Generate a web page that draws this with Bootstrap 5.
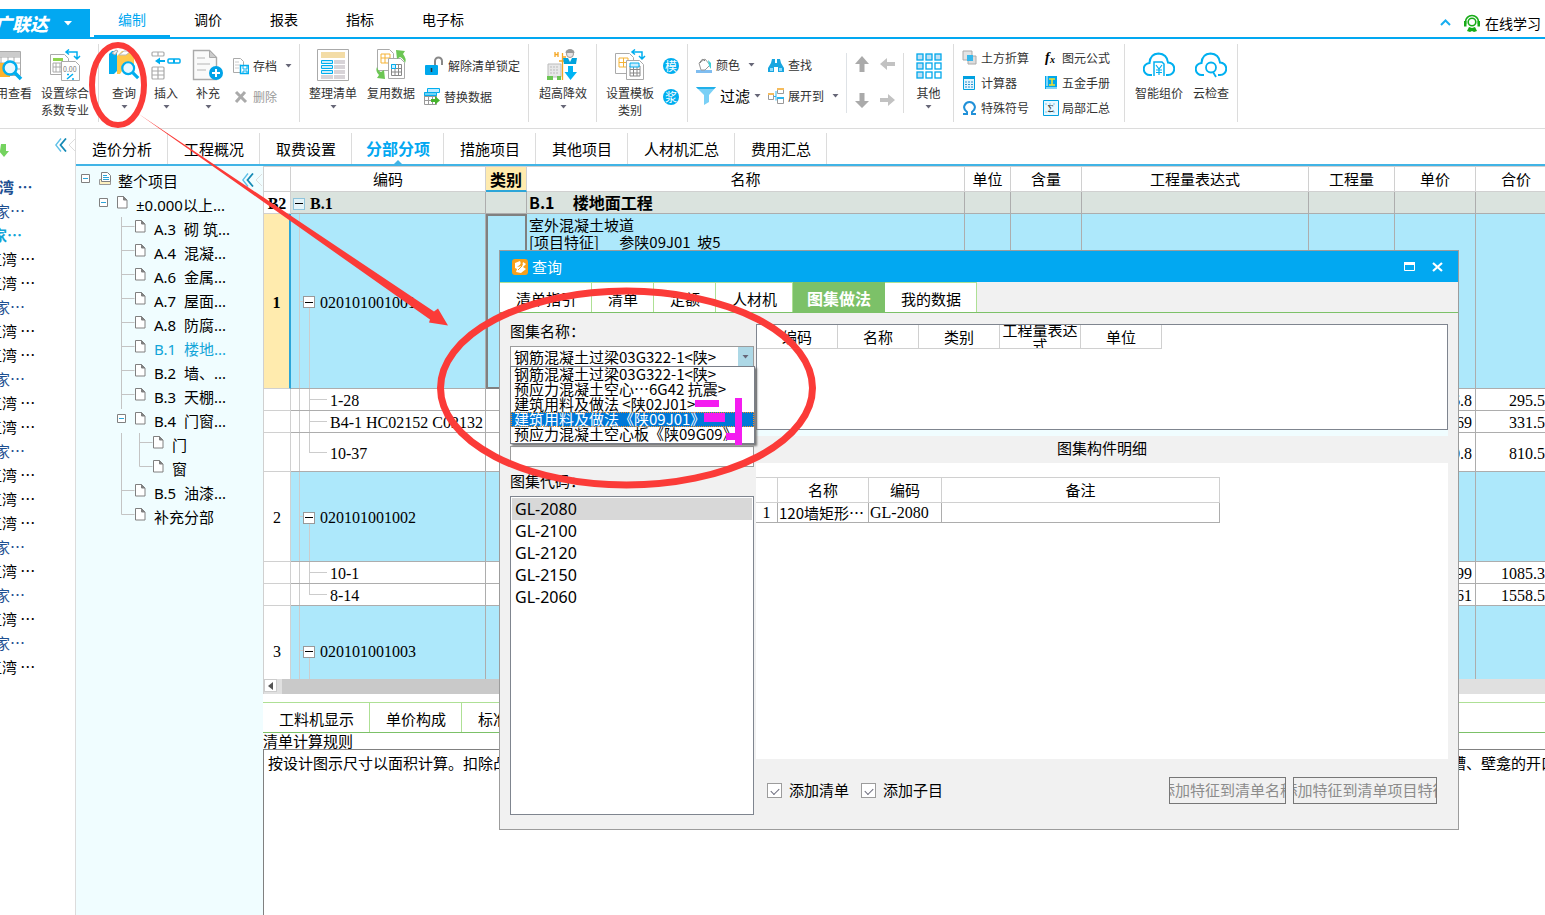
<!DOCTYPE html>
<html lang="zh-CN">
<head>
<meta charset="utf-8">
<meta name="viewport" content="width=device-width, initial-scale=1">
<title>广联达 - 查询</title>
<link href="https://cdn.jsdelivr.net/npm/bootstrap@5.3.0/dist/css/bootstrap.min.css" rel="stylesheet">
<style>
:root{--blue:#02a8f1;--line:#d0d0d0;--cell:#adadad;--sky:#ade8fb;--green:#7cc168}
body{font-family:"Noto Sans CJK SC",sans-serif;font-size:15px;line-height:20px;color:#000;background:#fff;overflow:hidden;white-space:nowrap}
button,input,select{font-family:inherit;font-size:inherit;color:inherit}
svg{display:block;flex:none}
a{color:inherit;text-decoration:none}
.plain{border:0;background:none;padding:0}
.num{font-family:"Liberation Serif","Noto Sans CJK SC",serif;font-size:16px}

.topbar{height:39px;border-bottom:2px solid var(--blue)}
.brand{width:90px;height:28px;background:var(--blue);color:#fff;font-size:18px;font-weight:900;font-style:italic;overflow:hidden}
.brand-name{margin-left:-6px}
.main-tab{font-size:14px;padding:0 24px;height:37px;line-height:38px}
.main-tab.active{color:var(--blue);border-bottom:2px solid var(--blue)}
.learn{font-size:14px}

.ribbon{height:90px;border-bottom:1px solid #dcdcdc;font-size:12px;line-height:17px;color:#333;overflow:hidden}
.group{border-right:1px solid #dcdcdc;margin:5px 0 6px}
.group.short{margin:14px 0 15px}
.tool{padding-top:5px;display:flex;flex-direction:column;align-items:center;color:#333}
.tool svg.big{margin-bottom:3px}
.tool .caret{margin-top:4px}
.w42{width:42px}.w50{width:50px}.w52{width:52px}.w54{width:54px}
.lookup-group{padding-right:6px}
.lookup-group .cut{margin-left:-19px;margin-right:3px}
.mid-group{padding:0 8px 0 9px}
.stack{padding-top:6px}
.stack button{display:flex;align-items:center;height:31px;gap:4px;color:#333}
.stack.tight{padding-top:1px}
.stack.tight button{height:25px;gap:3px}
.disk{width:16px;height:16px;border-radius:8px;background:#00aeef;color:#fff;line-height:15px;text-align:center}

.projects{width:76px;border-right:1px solid #dcdcdc;overflow:hidden}
.projects-head{height:43px;margin-bottom:3px}
.projects li{height:24px;line-height:24px}
.p-wan{margin-left:-13px}
.p-jia{margin-left:-5px;color:#1d4f91}
.p-head{margin-left:-16px;color:#1d4f91;font-weight:700}
.p-cur{margin-left:-8px;color:#13a5d8;font-weight:700}

.view-tabs{height:37px;border-bottom:2px solid #41b4e6}
.view-tab{padding:0 15px 0 16px;border-right:1px solid #dcdcdc;margin-top:4px;line-height:32px}
.view-tab.active{color:var(--blue);font-weight:700;font-size:16px;line-height:30px;padding:0 13px 0 14px;position:relative}
.view-tab.active::after{content:"";position:absolute;left:50%;bottom:0;margin-left:-4px;border:4px solid transparent;border-top:0;border-bottom-color:#41b4e6}

.tree{width:187px;background:#f0fdff;overflow:hidden}
.tree ul{padding:3px 0 0 5px}
.tree li{height:24px;line-height:24px;display:flex;font-family:"Noto Sans","Noto Sans CJK SC",sans-serif;white-space:pre}
.tree .gap18{width:18px}
.tree .cap{margin-left:1px}
.tree .cur{color:#13a5d8}

.sheet-box{height:513px;overflow:hidden;border-top:1px solid var(--line);border-left:1px solid var(--line)}
.sheet{table-layout:fixed;width:calc(100% + 12px);border-collapse:separate;border-spacing:0}
.sheet th,.sheet td{padding:0;border-right:1px solid var(--cell);border-bottom:1px solid var(--cell);height:22px;overflow:hidden}
.sheet thead th{height:25px;font-weight:400;text-align:center;border-color:var(--line);line-height:22px}
.sheet thead .picked{background:#ffebae;font-weight:700;font-size:16px;border-bottom:2px solid #2ca5d8}
.sheet tbody th{font-weight:400;text-align:center;border-color:var(--line);background:#fff}
.sheet tbody .num{line-height:19px;padding-top:2px}
.sheet .item td{background-color:var(--sky)}
.sheet .item td,.sheet .item th{height:90px}
.sheet .first td,.sheet .first th{height:175px}
.sheet .first th{background:#ffebae;font-weight:700;border-right:2px solid #2ca5d8}
.sheet .first td.kind{border:2px solid #808080;text-align:center}
.sheet .tall td,.sheet .tall th{height:39px}
.sheet .part td{background:#dae3de;font-weight:700;line-height:19px}
.sheet .part th{font-weight:700}
.sheet td.money{text-align:right;padding-right:3px}
.sheet .title-cell{padding-left:2px;font-size:16px;white-space:pre}
.sheet .name-cell{padding:2px;line-height:17px;white-space:pre;vertical-align:top}
.code{background-repeat:no-repeat;background-image:linear-gradient(#ccc,#ccc),linear-gradient(#ccc,#ccc),linear-gradient(#ccc,#ccc)}
.sheet .item .code{background-position:8px 0,18px 100%,8px 50%;background-size:1px 100%,1px 50%,4px 1px;padding-left:12px}
.sheet .kid .code{background-position:8px 0,18px 0,18px 50%;background-size:1px 100%,1px 100%,18px 1px;padding-left:39px}
.sheet .kid.last .code{background-size:1px 100%,1px 50%,18px 1px}
.fold{width:12px;height:12px;border:1px solid #999;background:#fff;padding:0;margin-right:5px;display:flex;align-items:center;justify-content:center}
.fold::before{content:"";width:8px;height:1px;background:#000}
.fold.pale{border-color:#8fc4dc;background:#e4f3f8}
.hbar{height:15px;background:#e0e0e0;border-left:1px solid var(--line)}
.hbar button{width:13px;height:13px;background:#fff;border:1px solid #ccc}
.hthumb{width:58%;margin-left:5px;background:#c9c9c9}

.low-tabs{height:31px;margin-top:8px;border-top:1px solid #aee095;border-bottom:1px solid var(--green)}
.low-tab{padding:0 15px 0 16px;border-right:1px solid #aee095;line-height:32px}
.rule-title{height:16px;line-height:16px}
.rule-text{border-top:1px solid #808080;border-left:1px solid #808080;padding:3px 4px;overflow:hidden}

.dialog{position:absolute;left:499px;right:86px;top:250px;background:#f1f1f1;border:1px solid #9c9c9c;z-index:5}
.dialog-title{height:31px;background:#02a8f1;color:#fff;padding:0 15px 0 12px}
.dlg-tabs{height:31px;border-bottom:1px solid var(--green)}
.dlg-tab{padding:0 15px 0 16px;background:#fff;border-top:1px solid #aee095;border-right:1px solid #aee095;line-height:32px}
.dlg-tab.active{background:var(--green);color:#fff;font-weight:700;border-color:var(--green);font-size:16px;line-height:30px;padding:0 13px 0 14px}
.left-pane{width:244px;margin-left:10px}
.combo{height:21px;border:1px solid #9c9c9c;background:#fff}
.combo select{appearance:none;border:0;background:none;padding:0 0 0 3px;height:19px;line-height:18px;outline:0}
.combo button{width:15px;background:#add8e6}
.menu{position:absolute;left:0;right:-1px;top:20px;background:#fff;border:1px solid #7a7f88;box-shadow:2px 2px 2px #777;padding:0 0 1px}
.menu li{height:15px;line-height:14px;padding-left:3px}
.menu li.on{background:#0078d7;color:#fff;outline:1px dotted #ff8c1a;outline-offset:-1px}
.field{height:21px;width:100%;border:1px solid #9c9c9c;background:#fff;margin-top:79px}
.codes{height:319px;border:1px solid #7f858f;background:#fff;padding:1px;font-family:"Noto Sans",sans-serif;font-size:16px}
.codes li{height:22px;line-height:22px;padding-left:3px}
.codes li.on{background:#d8d8d8}
.right-pane{margin:11px 10px 0 2px}
.upper{height:106px;border:1px solid #7f858f;background:#fff}
.upper th{width:81px;height:24px;padding:0;font-weight:400;text-align:center;border:solid var(--line);border-width:0 1px 1px 0}
.upper th div{height:23px;line-height:24px;overflow:hidden;white-space:normal}
.upper th .two{line-height:15px;padding:0 2px;display:flex;align-items:center}
.upper table,.lower table{border-collapse:separate;border-spacing:0}
.band{height:6px;background:#f0fdff}
.caption-row{height:27px;line-height:24px}
.lower{height:296px;background:#fff;padding-top:14px}
.lower table{table-layout:fixed;border-top:1px solid var(--line);width:464px}
.lower th,.lower td{padding:0 1px;font-weight:400;border:solid var(--line);border-width:0 1px 1px 0}
.lower th{text-align:center;height:25px}
.lower td{height:20px;line-height:19px;border-color:var(--cell);overflow:hidden}
.dlg-foot{height:70px;padding:0 11px 8px}
.dlg-foot input{appearance:none;width:15px;height:15px;margin:0 7px 0 0;border:1px solid #9c9c9c;background:#fff;display:grid;place-items:center}
.dlg-foot label{margin-right:12px}
.dlg-foot input:checked::before{content:"";width:8px;height:5px;border:solid #6b6b7b;border-width:0 0 1px 1px;transform:rotate(-45deg)}
.clip-btn{height:27px;border:1px solid #777;background:#f1f1f1;color:#8c8c8c;padding:0;overflow:hidden;display:flex;justify-content:center;align-items:center}
.clip-btn span{flex:none}
.clip-btn.narrow{width:117px;margin-right:7px}
.clip-btn.wide{width:144px}
.marks{position:absolute;left:0;top:0;z-index:9;pointer-events:none}
</style>
</head>
<body class="d-flex flex-column vh-100 position-relative">

<svg width="0" height="0" class="position-absolute">
  <symbol id="file" viewBox="0 0 18 24"><path d="M.5 3.500h6l3.500 3.500v8H.5z" fill="#fff" stroke="#808080"/><path d="M6.500 3.500v3.500H10z" fill="#808080" stroke="#808080"/></symbol>
  <symbol id="tee" viewBox="0 0 18 24"><path d="M4.500 0v24M4.500 9.500h13" stroke="#c4c4c4" fill="none"/></symbol>
  <symbol id="ell" viewBox="0 0 18 24"><path d="M4.500 0v9.500h13" stroke="#c4c4c4" fill="none"/></symbol>
  <symbol id="bar" viewBox="0 0 18 24"><path d="M4.500 0v24" stroke="#c4c4c4"/></symbol>
  <symbol id="box" viewBox="0 0 18 24"><path d="M.5 5.500h8v8h-8z" fill="#fff" stroke="#808080"/><path d="M2 9.500h5" stroke="#2ca5d8"/></symbol>
  <symbol id="car" viewBox="0 0 7 4"><path d="M.5 0h6L3.500 3.500z" fill="#667"/></symbol>
  <symbol id="chev" viewBox="0 0 22 14"><path d="M6 .5L.8 7 6 13.500" stroke="#5ec0e8" fill="none" stroke-width="1.400"/><path d="M11 .5L5.500 7l5.500 6.500" stroke="#158ab5" fill="none" stroke-width="1.800"/><path d="M20 1l-6 6 6 6" stroke="#ddd" fill="none"/></symbol>
  <symbol id="lens" viewBox="0 0 22 22"><circle cx="9" cy="9" r="6.500" fill="#e8f8ff" stroke="#00aeef" stroke-width="2.400"/><path d="M14 14l6 6" stroke="#00aeef" stroke-width="3.500"/></symbol>
</svg>

<header class="topbar d-flex">
  <button class="plain brand align-self-end d-flex align-items-center"><span class="brand-name">广联达</span><svg class="ms-3" width="8" height="5"><path d="M0 0h8L4 4.500z" fill="#fff"/></svg></button>
  <nav class="d-flex ms-1">
    <a href="#" class="main-tab active">编制</a><a href="#" class="main-tab">调价</a><a href="#" class="main-tab">报表</a><a href="#" class="main-tab">指标</a><a href="#" class="main-tab">电子标</a>
  </nav>
  <a href="#" class="learn ms-auto d-flex align-items-center pe-1 pt-2">
    <svg width="11" height="7" class="me-2"><path d="M1 6l4.500-4.500L10 6" stroke="#18aef0" stroke-width="2" fill="none"/></svg>
    <svg width="18" height="18" class="ms-1"><path d="M2.500 10V8a6.500 6.500 0 0 1 13 0v2" stroke="#18ac18" stroke-width="1.600" fill="none"/><circle cx="9" cy="8" r="3.800" fill="none" stroke="#18ac18" stroke-width="1.600"/><path d="M1 7h2.500v5.500H1zM14.500 7H17v5.500h-2.500zM4 17l2-4 3 1 3-1 2 4-3 1-2-1-2 1z" fill="#18ac18"/></svg><span class="ps-1">在线学习</span>
  </a>
</header>

<div class="ribbon d-flex">
  <div class="group lookup-group d-flex">
    <button class="plain tool w54 cut"><svg class="big" width="32" height="32"><path d="M2.500 2.500h26v24h-26zM2 8h27M9 8v18M16 8v18M22 8v18M2 14h26M2 20h26" fill="#fff" stroke="#aaa"/><path d="M3 3h25v5H3z" fill="#ccc"/><path d="M5 14h13v14H5z" fill="#ffb32c"/><svg x="9" y="10" width="22" height="22"><use href="#lens"/></svg></svg>费用查看</button>
    <button class="plain tool w54"><svg class="big" width="32" height="32"><path d="M1.500 5.500h14l4 4v16h-18z" fill="#fff" stroke="#aaa"/><path d="M4 9h10v3H4z" fill="#8fd34f"/><path d="M4 14h10v9H4zM7 14v9M11 14v9M4 18h10" fill="none" stroke="#aaa"/><path d="M12.500 12.500h14l4 4v15h-18z" fill="#fff" stroke="#aaa"/><text x="14" y="23" font-size="7" fill="#777">0.00</text><path d="M18 30l6-5M18 25.500h2M23 30h2" stroke="#00aeef" stroke-width="1.500"/><path d="M17 3h11v6M20 .5L17 3l3 2.500M25 7l3 3 3-3" fill="none" stroke="#00aeef" stroke-width="1.500"/></svg>设置综合<br>系数专业</button>
  </div>
  <div class="group d-flex ps-1 pe-1">
    <button class="plain tool w42"><svg class="big" width="32" height="32"><path d="M1 5l3-3h5v20l-3 3H1z" fill="#00aeef"/><path d="M4 4l4-3 2 1-3 4z" fill="#eee" stroke="#aaa"/><path d="M9 7l5-5h12v20H14l-2 3H9z" fill="#ffc84a"/><path d="M11 6l5-4h7l-5 4z" fill="#fff" stroke="#bbb"/><svg x="12" y="11" width="20" height="20" viewBox="0 0 22 22"><use href="#lens"/></svg></svg>查询<svg class="caret" width="7" height="4"><use href="#car"/></svg></button>
    <button class="plain tool w42"><svg class="big" width="32" height="32"><g fill="#fff" stroke="#aaa" stroke-width="1.200"><rect x="2" y="3" width="12" height="4" rx="1"/><path d="M8 3v4"/><rect x="2" y="18" width="12" height="12" rx="1"/><path d="M2 22h12M2 26h12M8 18v12"/></g><rect x="18" y="10" width="12" height="4" rx="1" fill="#fff" stroke="#00aeef" stroke-width="1.500"/><path d="M24 10v4M8 12h7" stroke="#00aeef" stroke-width="2"/><path d="M5 12l5-3.500v7z" fill="#00aeef"/></svg>插入<svg class="caret" width="7" height="4"><use href="#car"/></svg></button>
    <button class="plain tool w42"><svg class="big" width="32" height="32"><path d="M1.500 1.500h16l7 7v22h-23z" fill="#fafafa" stroke="#aaa" stroke-width="1.400"/><path d="M17.500 1.500v7h7z" fill="#ccc" stroke="#aaa"/><path d="M5 9h8M5 15h13M5 21h9" stroke="#ccc" stroke-width="1.500"/><circle cx="24" cy="24" r="7" fill="#00a3e8"/><path d="M20 24h8M24 20v8" stroke="#fff" stroke-width="2"/></svg>补充<svg class="caret" width="7" height="4"><use href="#car"/></svg></button>
    <div class="stack ms-1" style="width:62px">
      <button class="plain"><svg width="16" height="18"><path d="M.5 1.500h7l3 3v11H.5z" fill="#fff" stroke="#aaa"/><path d="M2 5h4M2 8h6M2 11h4" stroke="#ccc"/><path d="M7.500 8.500h8v8h-8z" fill="#fff" stroke="#00aeef" stroke-width="1.500"/><path d="M10 9v3h4V9M10 16v-2h4v2" stroke="#00aeef" fill="none"/></svg>存档<svg class="ms-1" width="7" height="4"><use href="#car"/></svg></button>
      <button class="plain" style="color:#999"><svg width="16" height="14"><path d="M3 2l10 10M12 2L3 12" stroke="#aaa" stroke-width="3"/></svg>删除</button>
    </div>
  </div>
  <div class="group d-flex ps-2 pe-2">
    <button class="plain tool w50"><svg class="big" width="32" height="32"><path d="M.5.5h31v31H.5z" fill="#fff" stroke="#aaa"/><path d="M4 3h24v6H4z" fill="#f3dca6"/><path d="M17 11h11v4H17zM17 16h11v4H17zM17 21h11v4H17zM17 26h11v4H17zM4 26h12v4H4z" fill="#d8d4d8"/><path d="M4.500 11.500h11v3h-11zM4.500 16.500h11v3h-11zM4.500 21.500h11v3h-11z" fill="#ccecf8" stroke="#00aeef"/></svg>整理清单<svg class="caret" width="7" height="4"><use href="#car"/></svg></button>
    <button class="plain tool w50 ms-2"><svg class="big" width="32" height="32"><path d="M2.500.5h12l4 4v17h-16z" fill="#fff" stroke="#aaa"/><path d="M6 5h9v9H6zM6 9h9M10 5v9" fill="none" stroke="#f5b335"/><path d="M13.500 9.500h12l4 4v16h-16z" fill="#fff" stroke="#aaa"/><path d="M16.500 15.500h10v11h-10zM16.500 19.500h10M16.500 23h10M20 15.500v11M23.500 15.500v11" fill="none" stroke="#888"/><path d="M16.500 15.500h4v4h-4z" fill="#cef" stroke="#00aeef"/><path d="M21 1l9 1-2 3q4 5 2 9-2-5-5-6l-3 2z" fill="#6cc654"/><path d="M10 30l-8-1 2-3q-4-4-2-8 1 4 4 5l3-2z" fill="#6cc654"/></svg>复用数据</button>
    <div class="stack ms-2">
      <button class="plain"><svg width="20" height="20"><rect x="1" y="9" width="13" height="10" rx="1" fill="#00a8ec"/><path d="M11 9V5a3.500 3.500 0 0 1 7 0v4" fill="none" stroke="#888" stroke-width="2"/><path d="M7.500 12v4" stroke="#333" stroke-width="1.500"/></svg>解除清单锁定</button>
      <button class="plain"><svg width="16" height="17"><path d="M3.500.5h12v4h-12z" fill="#bfeaff" stroke="#00aeef"/><path d="M.5 4.500h12v12H.5zM.5 8.500h12M.5 12.500h12M4.500 8v8M8.500 8v8" fill="#fff" stroke="#999"/><path d="M.5 4.500h12v3H.5z" fill="#6fd2f5" stroke="#00aeef"/><path d="M7 11h4V8l5 4.500-5 4V14H7z" fill="#45b32c"/></svg>替换数据</button>
    </div>
  </div>
  <div class="group mid-group d-flex">
    <button class="plain tool w50"><svg class="big" width="32" height="32"><path d="M1 15h13v13H1z" fill="#e8e8e8" stroke="#bbb"/><path d="M3 18h9M3 21h9M3 24h9" stroke="#bbb" stroke-dasharray="2 1"/><path d="M0 27h6v4H0zM10 27h4v4h-4z" fill="#6cc654"/><path d="M15.500 4v27M12 12h6M8 3v5M11 3v5M8 5.500h3M15 8h4" stroke="#f5a623" stroke-width="1.300"/><circle cx="23" cy="5" r="3.500" fill="#e7e2e2" stroke="#999"/><path d="M18.500 4a4.500 4 0 0 1 9 0z" fill="#999"/><path d="M16 9h14l-1 6H17z" fill="#00a3dc"/><path d="M21 9l2 4 2-4z" fill="#fff"/><path d="M21 17h5v6h4l-6.500 8-6-8H21z" fill="#00b4f4"/></svg>超高降效<svg class="caret" width="7" height="4"><use href="#car"/></svg></button>
  </div>
  <div class="group d-flex ps-2 pe-2">
    <button class="plain tool w50"><svg class="big" width="32" height="32"><path d="M1.500 4.500h14l4 4v16h-18z" fill="#fff" stroke="#aaa"/><path d="M5 9h9v9H5zM5 13.500h9M9.500 9v9" fill="none" stroke="#f5b335"/><path d="M12.500 11.500h13l4 4v15h-17z" fill="#fff" stroke="#aaa"/><path d="M16 17h10v10H16zM16 20.500h10M16 24h10M19.500 17v10M23 17v10" fill="none" stroke="#888"/><path d="M16 14h9v4h-9z" fill="#cef" stroke="#00aeef"/><path d="M18 3h10v6M21 .5L18 3l3 2.500M25 7l3 3 3-3" fill="none" stroke="#00aeef" stroke-width="1.500"/></svg>设置模板<br>类别</button>
    <div class="stack ms-2"><button class="plain"><span class="disk text-white">模</span></button><button class="plain"><span class="disk text-white">浆</span></button></div>
  </div>
  <div class="group short border-end-0 d-flex ps-2 m-0 pt-1">
    <div class="stack" style="width:72px">
      <button class="plain"><svg width="16" height="16"><path d="M0 13h16v3H0z" fill="#7fbdf0"/><path d="M3 6l6-4 5 6-5 5H5z" fill="#fff" stroke="#999"/><path d="M4 6q2-6 5-2" fill="none" stroke="#777"/><path d="M12 3l3 3v6l-2-3z" fill="#40d0d8"/></svg>颜色<svg class="ms-1" width="7" height="4"><use href="#car"/></svg></button>
      <button class="plain"><svg width="20" height="18"><path d="M0 0h20l-7 8v7l-5 3V8z" fill="#7ad0f6"/><path d="M0 0h20l-2 2H2z" fill="#20b0ea"/></svg><span style="font-size:15px" class="text-black">过滤</span><svg width="7" height="4"><use href="#car"/></svg></button>
    </div>
    <div class="stack" style="width:78px">
      <button class="plain"><svg width="16" height="16"><path d="M4 2h3v4h2V2h3l1 4 3 5v4h-6v-5H6v5H0v-4l3-5z" fill="#18a6e0"/><path d="M2 11h3v3H2zM11 11h3v3h-3z" fill="#8fdcfb"/></svg>查找</button>
      <button class="plain"><svg width="16" height="16"><path d="M.5 5.500h5v6h-5zM9.500.5h6v5h-6zM9.500 9.500h6v6h-6z" fill="#fff" stroke="#999"/><path d="M6 8.500h2M8 3v9.500" stroke="#2ab4ee" fill="none"/><path d="M0 5h6v2H0zM9 0h7v2H9z" fill="#f5bb5c"/><path d="M9 9h7v2H9z" fill="#2ab4ee"/></svg>展开到<svg class="ms-1" width="7" height="4"><use href="#car"/></svg></button>
    </div>
  </div>
  <div class="group short d-flex flex-wrap border-start align-content-between justify-content-between px-2" style="width:58px">
    <button class="plain"><svg width="14" height="22"><path d="M7 3l7 8H9.500v8h-5v-8H0z" fill="#aaa"/></svg></button>
    <button class="plain"><svg width="15" height="22"><path d="M0 11l7-6v4h8v4H7v4z" fill="#c2c2c2"/></svg></button>
    <button class="plain"><svg width="14" height="22"><path d="M7 17l7-7H9.500V2h-5v8H0z" fill="#aaa"/></svg></button>
    <button class="plain"><svg width="15" height="22"><path d="M15 9L8 3v4H0v4h8v4z" fill="#c2c2c2"/></svg></button>
  </div>
  <div class="group d-flex px-1">
    <button class="plain tool" style="width:41px"><svg class="big" width="26" height="32"><g fill="#fff" stroke="#00a8ec" stroke-width="1.300"><g fill="#bfe0f4"><rect x="1" y="5" width="6" height="6"/><rect x="10" y="5" width="6" height="6"/><rect x="19" y="5" width="6" height="6"/><rect x="1" y="14" width="6" height="6"/><rect x="1" y="23" width="6" height="6"/></g><rect x="10" y="14" width="6" height="6"/><rect x="19" y="14" width="6" height="6"/><rect x="10" y="23" width="6" height="6"/><rect x="19" y="23" width="6" height="6"/></g></svg>其他<svg class="caret" width="7" height="4"><use href="#car"/></svg></button>
  </div>
  <div class="group d-flex ps-2" style="width:171px">
    <div class="stack tight" style="width:81px">
      <button class="plain"><svg width="16" height="16"><path d="M1 1h9v9H1z" fill="#e4e4e4" stroke="#aaa"/><path d="M6 6h8v8H6z" fill="#ddd" stroke="#aaa"/><path d="M5 5h6v6H5z" fill="#35b8ec"/></svg>土方折算</button>
      <button class="plain"><svg width="16" height="16"><path d="M1.500 1.500h11v13h-11z" fill="#e2f5fd" stroke="#00a0e0"/><path d="M1 1h12v3H1z" fill="#00a0e0"/><path d="M3 7h8M3 9.500h8M3 12h8" stroke="#2c8fd0" stroke-dasharray="2 1"/></svg>计算器</button>
      <button class="plain"><svg width="16" height="16"><path d="M1 14h4v-2Q1 9 2.500 5.500 4 2 7.500 2t5 3.500Q14 9 10 12v2h4" fill="none" stroke="#2090d8" stroke-width="2"/></svg>特殊符号</button>
    </div>
    <div class="stack tight">
      <button class="plain"><svg width="16" height="16"><text x="2" y="12" font-size="14" font-style="italic" font-weight="700" font-family="Liberation Serif">f</text><text x="7" y="13" font-size="10" font-style="italic" font-weight="700" font-family="Liberation Serif">x</text></svg>图元公式</button>
      <button class="plain"><svg width="16" height="16"><path d="M2 1h12v13H2z" fill="#00a8ec"/><path d="M4 1v10M3 13h11" stroke="#fff"/><path d="M6 4h6M6 10h6M9 4v6" stroke="#f6e02c" stroke-width="1.500"/></svg>五金手册</button>
      <button class="plain"><svg width="16" height="16"><path d="M.5.500h15v15H.5z" fill="#e8f8ff" stroke="#00a0e0"/><path d="M2 4h12M2 12h12" stroke="#7fcbee" stroke-dasharray="2 2"/><text x="4.500" y="12" font-size="11" fill="#444" font-family="Liberation Serif">Σ</text></svg>局部汇总</button>
    </div>
  </div>
  <div class="group d-flex ps-2">
    <button class="plain tool w52"><svg class="big" width="32" height="32"><path d="M9 26H7A5.500 5.500 0 0 1 6.500 14Q7 5 15.500 4.500 24 5 25 13.500A6 6 0 0 1 25 26h-2" fill="none" stroke="#00b0f0" stroke-width="2"/><path d="M11 27V13h8l2 2v12" fill="none" stroke="#00b0f0" stroke-width="1.500"/><path d="M13 16l3 4 3-4M16 20v6M13 21h6M13 23.500h6" fill="none" stroke="#00b0f0" stroke-width="1.200"/></svg>智能组价</button>
    <button class="plain tool w52"><svg class="big" width="32" height="32"><path d="M9 26H7A5.500 5.500 0 0 1 6.500 14Q7 5 15.500 4.500 24 5 25 13.500A6 6 0 0 1 25 26h-2" fill="none" stroke="#00b0f0" stroke-width="2"/><circle cx="16" cy="18.500" r="5" fill="none" stroke="#00b0f0" stroke-width="1.800"/><path d="M18 23l3 5" stroke="#00b0f0" stroke-width="1.800"/></svg>云检查</button>
  </div>
</div>

<div class="d-flex flex-fill">
  <aside class="projects flex-shrink-0">
    <div class="projects-head d-flex align-items-center justify-content-between"><svg width="9" height="14"><path d="M1 0h5v7h3l-5 6-5-6h1z" fill="#74d35f"/></svg><button class="plain mb-2 pb-1"><svg width="20" height="14"><use href="#chev" width="22" height="14"/></svg></button></div>
    <ul class="list-unstyled m-0">
      <li><a href="#" class="p-head">江湾 …</a></li><li><a href="#" class="p-jia">家…</a></li><li><a href="#" class="p-cur">家…</a></li>
      <li><a href="#" class="p-wan">江湾 …</a></li><li><a href="#" class="p-wan">江湾 …</a></li><li><a href="#" class="p-jia">家…</a></li>
      <li><a href="#" class="p-wan">江湾 …</a></li><li><a href="#" class="p-wan">江湾 …</a></li><li><a href="#" class="p-jia">家…</a></li>
      <li><a href="#" class="p-wan">江湾 …</a></li><li><a href="#" class="p-wan">江湾 …</a></li><li><a href="#" class="p-jia">家…</a></li>
      <li><a href="#" class="p-wan">江湾 …</a></li><li><a href="#" class="p-wan">江湾 …</a></li><li><a href="#" class="p-wan">江湾 …</a></li>
      <li><a href="#" class="p-jia">家…</a></li><li><a href="#" class="p-wan">江湾 …</a></li><li><a href="#" class="p-jia">家…</a></li>
      <li><a href="#" class="p-wan">江湾 …</a></li><li><a href="#" class="p-jia">家…</a></li><li><a href="#" class="p-wan">江湾 …</a></li>
    </ul>
  </aside>

  <main class="flex-fill d-flex flex-column" style="min-width:0">
    <nav class="view-tabs d-flex flex-shrink-0">
      <a href="#" class="view-tab">造价分析</a><a href="#" class="view-tab">工程概况</a><a href="#" class="view-tab">取费设置</a><a href="#" class="view-tab active">分部分项</a><a href="#" class="view-tab">措施项目</a><a href="#" class="view-tab">其他项目</a><a href="#" class="view-tab">人材机汇总</a><a href="#" class="view-tab">费用汇总</a>
    </nav>
    <div class="d-flex flex-fill">
      <section class="tree flex-shrink-0">
        <ul class="list-unstyled m-0">
          <li><svg width="18" height="24"><use href="#box"/></svg><svg width="18" height="24"><path d="M.5 10.500h11v5H.5z" fill="#fdf0bf" stroke="#999"/><path d="M2.500 3.500h6l3 3v6h-9z" fill="#fff" stroke="#808080"/><path d="M4 6.500h4M4 8.500h6M4 10.500h6" stroke="#2ca5d8"/></svg><a href="#" class="cap">整个项目</a><button class="plain ms-auto d-flex pt-1"><svg width="21" height="14"><use href="#chev" width="22" height="14"/></svg></button></li>
          <li><span class="gap18"></span><svg width="18" height="24"><use href="#box"/></svg><svg width="18" height="24"><use href="#file"/></svg><a href="#" class="cap">±0.000以上...</a></li>
          <li><span class="gap18"></span><span class="gap18"></span><svg width="18" height="24"><use href="#tee"/></svg><svg width="18" height="24"><use href="#file"/></svg><a href="#" class="cap">A.3  砌 筑...</a></li>
          <li><span class="gap18"></span><span class="gap18"></span><svg width="18" height="24"><use href="#tee"/></svg><svg width="18" height="24"><use href="#file"/></svg><a href="#" class="cap">A.4  混凝...</a></li>
          <li><span class="gap18"></span><span class="gap18"></span><svg width="18" height="24"><use href="#tee"/></svg><svg width="18" height="24"><use href="#file"/></svg><a href="#" class="cap">A.6  金属...</a></li>
          <li><span class="gap18"></span><span class="gap18"></span><svg width="18" height="24"><use href="#tee"/></svg><svg width="18" height="24"><use href="#file"/></svg><a href="#" class="cap">A.7  屋面...</a></li>
          <li><span class="gap18"></span><span class="gap18"></span><svg width="18" height="24"><use href="#tee"/></svg><svg width="18" height="24"><use href="#file"/></svg><a href="#" class="cap">A.8  防腐...</a></li>
          <li><span class="gap18"></span><span class="gap18"></span><svg width="18" height="24"><use href="#tee"/></svg><svg width="18" height="24"><use href="#file"/></svg><a href="#" class="cap cur">B.1  楼地...</a></li>
          <li><span class="gap18"></span><span class="gap18"></span><svg width="18" height="24"><use href="#tee"/></svg><svg width="18" height="24"><use href="#file"/></svg><a href="#" class="cap">B.2  墙、...</a></li>
          <li><span class="gap18"></span><span class="gap18"></span><svg width="18" height="24"><use href="#tee"/></svg><svg width="18" height="24"><use href="#file"/></svg><a href="#" class="cap">B.3  天棚...</a></li>
          <li><span class="gap18"></span><span class="gap18"></span><svg width="18" height="24"><use href="#box"/></svg><svg width="18" height="24"><use href="#file"/></svg><a href="#" class="cap">B.4  门窗...</a></li>
          <li><span class="gap18"></span><span class="gap18"></span><svg width="18" height="24"><use href="#bar"/></svg><svg width="18" height="24"><use href="#tee"/></svg><svg width="18" height="24"><use href="#file"/></svg><a href="#" class="cap">门</a></li>
          <li><span class="gap18"></span><span class="gap18"></span><svg width="18" height="24"><use href="#bar"/></svg><svg width="18" height="24"><use href="#ell"/></svg><svg width="18" height="24"><use href="#file"/></svg><a href="#" class="cap">窗</a></li>
          <li><span class="gap18"></span><span class="gap18"></span><svg width="18" height="24"><use href="#tee"/></svg><svg width="18" height="24"><use href="#file"/></svg><a href="#" class="cap">B.5  油漆...</a></li>
          <li><span class="gap18"></span><span class="gap18"></span><svg width="18" height="24"><use href="#ell"/></svg><svg width="18" height="24"><use href="#file"/></svg><a href="#" class="cap">补充分部</a></li>
        </ul>
      </section>

      <section class="flex-fill d-flex flex-column" style="min-width:0">
        <div class="sheet-box">
          <table class="sheet">
            <colgroup><col style="width:27px"><col style="width:195px"><col style="width:41px"><col><col style="width:46px"><col style="width:71px"><col style="width:227px"><col style="width:86px"><col style="width:81px"><col style="width:81px"></colgroup>
            <thead><tr><th></th><th>编码</th><th class="picked">类别</th><th>名称</th><th>单位</th><th>含量</th><th>工程量表达式</th><th>工程量</th><th>单价</th><th>合价</th></tr></thead>
            <tbody>
              <tr class="part"><th class="num">B2</th><td><div class="d-flex align-items-center num" style="padding-left:2px"><button class="fold pale"></button>B.1</div></td><td></td><td class="title-cell">B.1     楼地面工程</td><td></td><td></td><td></td><td></td><td></td><td></td></tr>
              <tr class="item first"><th class="num">1</th><td class="code"><div class="d-flex align-items-center num"><button class="fold"></button>020101001001</div></td><td class="kind">项</td><td class="name-cell">室外混凝土坡道
[项目特征]      参陕09J01  坡5</td><td></td><td></td><td></td><td></td><td></td><td></td></tr>
              <tr class="kid"><th></th><td class="code num">1-28</td><td></td><td></td><td></td><td></td><td></td><td></td><td class="num money">36.8</td><td class="num money">295.50</td></tr>
              <tr class="kid"><th></th><td class="code num">B4-1 HC02152 C02132</td><td></td><td></td><td></td><td></td><td></td><td></td><td class="num money">331.69</td><td class="num money">331.56</td></tr>
              <tr class="kid last tall"><th></th><td class="code num">10-37</td><td></td><td></td><td></td><td></td><td></td><td></td><td class="num money">810.8</td><td class="num money">810.50</td></tr>
              <tr class="item"><th class="num">2</th><td class="code"><div class="d-flex align-items-center num"><button class="fold"></button>020101001002</div></td><td></td><td></td><td></td><td></td><td></td><td></td><td></td><td></td></tr>
              <tr class="kid"><th></th><td class="code num">10-1</td><td></td><td></td><td></td><td></td><td></td><td></td><td class="num money">10.99</td><td class="num money">1085.39</td></tr>
              <tr class="kid last"><th></th><td class="code num">8-14</td><td></td><td></td><td></td><td></td><td></td><td></td><td class="num money">15.61</td><td class="num money">1558.56</td></tr>
              <tr class="item"><th class="num">3</th><td class="code"><div class="d-flex align-items-center num"><button class="fold"></button>020101001003</div></td><td></td><td></td><td></td><td></td><td></td><td></td><td></td><td></td></tr>
            </tbody>
          </table>
        </div>
        <div class="hbar d-flex"><button class="plain d-flex align-items-center justify-content-center"><svg width="5" height="8"><path d="M5 0v8L0 4z" fill="#555"/></svg></button><div class="hthumb"></div></div>
        <nav class="low-tabs d-flex"><a href="#" class="low-tab">工料机显示</a><a href="#" class="low-tab">单价构成</a><a href="#" class="low-tab">标准换算</a></nav>
        <div class="rule-title">清单计算规则</div>
        <div class="rule-text flex-fill">按设计图示尺寸以面积计算。扣除凸出地面构筑物、设备基础、室内铁道、地沟等所占面积，不扣除间壁墙和0.3m2以内的柱、垛、附墙烟囱及孔洞所占面积。门洞、空圈、暖气包槽、壁龛的开口部分不增加面积</div>
      </section>
    </div>
  </main>
</div>

<div class="dialog" role="dialog" aria-label="查询">
  <div class="dialog-title d-flex align-items-center">
    <svg width="16" height="16"><rect width="16" height="16" rx="3" fill="#f9a01b"/><path d="M3 4l5-2 1 3-4 3 5-1 1-4 3 2-3 3 3 2-5 4-5-1 1-3-2-1z" fill="#fff"/><path d="M6 11l4-4M8 5l3 1" stroke="#f9a01b"/></svg><span class="ms-1">查询</span>
    <button class="plain ms-auto me-3"><svg width="13" height="10"><path d="M1.500.500h10v8h-10z" fill="none" stroke="#fff"/><path d="M1 0h11v3H1z" fill="#fff"/></svg></button>
    <button class="plain"><svg width="11" height="10"><path d="M1 1l9 8M10 1L1 9" stroke="#fff" stroke-width="2.200"/></svg></button>
  </div>
  <nav class="dlg-tabs d-flex"><a href="#" class="dlg-tab">清单指引</a><a href="#" class="dlg-tab">清单</a><a href="#" class="dlg-tab">定额</a><a href="#" class="dlg-tab">人材机</a><a href="#" class="dlg-tab active">图集做法</a><a href="#" class="dlg-tab">我的数据</a></nav>
  <div class="d-flex">
    <div class="left-pane flex-shrink-0">
      <label for="atlas" class="d-block" style="padding:8px 0 5px">图集名称：</label>
      <div class="position-relative">
        <div class="combo d-flex"><select id="atlas" class="flex-fill"><option>钢筋混凝土过梁03G322-1&lt;陕&gt;</option></select><button class="plain d-flex align-items-center justify-content-center" aria-label="展开"><svg width="7" height="4"><use href="#car"/></svg></button></div>
        <ul class="menu list-unstyled m-0" role="listbox">
          <li role="option">钢筋混凝土过梁03G322-1&lt;陕&gt;</li>
          <li role="option">预应力混凝土空心…6G42 抗震&gt;</li>
          <li role="option">建筑用料及做法 &lt;陕02J01&gt;</li>
          <li role="option" class="on" aria-selected="true">建筑用料及做法《陕09J01》</li>
          <li role="option">预应力混凝土空心板《陕09G09》</li>
        </ul>
      </div>
      <input class="field" type="text" aria-label="图集代码筛选">
      <div style="padding:4px 0 5px">图集代码：</div>
      <ul class="codes list-unstyled m-0"><li class="on">GL-2080</li><li>GL-2100</li><li>GL-2120</li><li>GL-2150</li><li>GL-2060</li></ul>
    </div>
    <div class="right-pane flex-fill">
      <div class="upper"><table><thead><tr><th><div>编码</div></th><th><div>名称</div></th><th><div>类别</div></th><th><div class="two">工程量表达式</div></th><th><div>单位</div></th></tr></thead></table></div>
      <div class="band"></div>
      <div class="caption-row text-center">图集构件明细</div>
      <div class="lower">
        <table><colgroup><col style="width:22px"><col style="width:91px"><col style="width:73px"><col></colgroup>
          <thead><tr><th></th><th>名称</th><th>编码</th><th>备注</th></tr></thead>
          <tbody><tr><td class="text-center num">1</td><td>120墙矩形…</td><td class="num">GL-2080</td><td></td></tr></tbody></table>
      </div>
      <div class="dlg-foot d-flex align-items-center">
        <input type="checkbox" id="c1" checked><label for="c1">添加清单</label>
        <input type="checkbox" id="c2" checked><label for="c2">添加子目</label>
        <button class="clip-btn narrow ms-auto" disabled><span>添加特征到清单名称</span></button>
        <button class="clip-btn wide" disabled><span>添加特征到清单项目特征</span></button>
      </div>
    </div>
  </div>
</div>

<svg class="marks" width="1545" height="915" aria-hidden="true">
  <g fill="none" stroke="#fb3b38"><ellipse cx="118" cy="85" rx="26" ry="40" stroke-width="6"/><ellipse cx="626.500" cy="388" rx="186" ry="97" stroke-width="7"/></g>
  <path d="M138 113.500l296 198 4-3 10 17-19-3 1-3z" fill="#fb3b38"/>
  <path d="M695 400h24v7h-24zM704 413h21v9h-21zM735 398h7v47h-7zM726 433h9v7h-9z" fill="#f41cf0"/>
</svg>
<script src="https://cdn.jsdelivr.net/npm/bootstrap@5.3.0/dist/js/bootstrap.bundle.min.js"></script>
</body>
</html>
